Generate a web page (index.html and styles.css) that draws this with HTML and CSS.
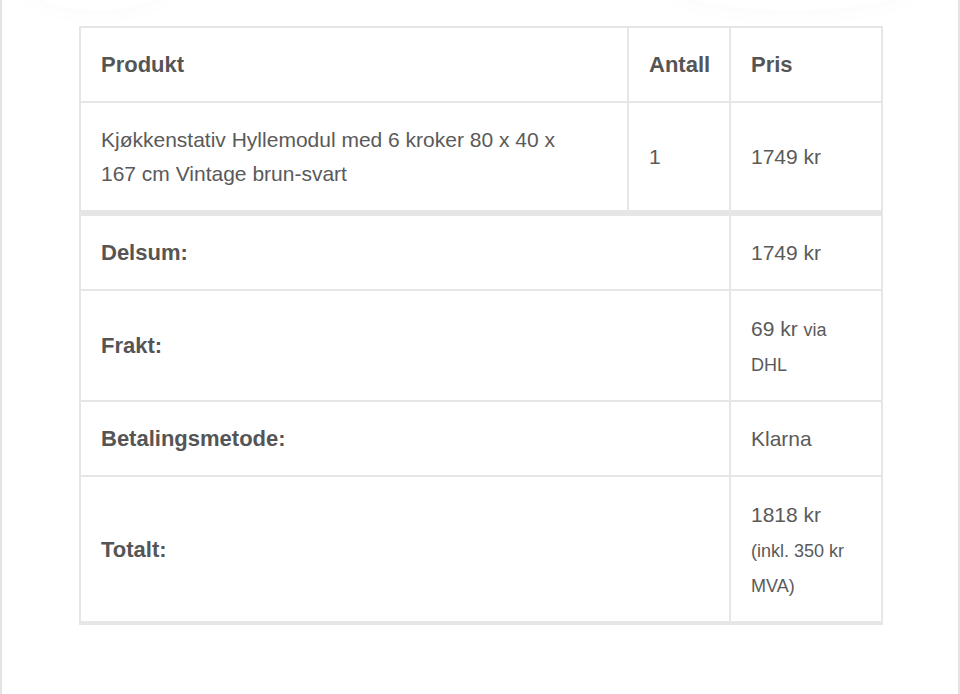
FILE: index.html
```html
<!DOCTYPE html>
<html lang="no">
<head>
    <meta charset="UTF-8">
    <meta name="viewport" content="width=device-width, initial-scale=1.0">
    <title>Ordredetaljer</title>
    <link rel="stylesheet" href="styles.css">
</head>
<body>
    <div class="page">
        <div class="glow glow-left"></div>
        <div class="glow glow-right"></div>
        <table class="order-details">
            <thead>
                <tr>
                    <th class="col-product">Produkt</th>
                    <th class="col-qty">Antall</th>
                    <th class="col-price">Pris</th>
                </tr>
            </thead>
            <tbody>
                <tr>
                    <td class="col-product product-name">Kjøkkenstativ Hyllemodul med 6 kroker 80 x 40 x 167 cm Vintage brun-svart</td>
                    <td class="col-qty">1</td>
                    <td class="col-price">1749 kr</td>
                </tr>
            </tbody>
            <tfoot>
                <tr>
                    <th colspan="2">Delsum:</th>
                    <td>1749 kr</td>
                </tr>
                <tr>
                    <th colspan="2">Frakt:</th>
                    <td class="multi">69 kr <small>via</small> <small>DHL</small></td>
                </tr>
                <tr>
                    <th colspan="2">Betalingsmetode:</th>
                    <td>Klarna</td>
                </tr>
                <tr>
                    <th colspan="2">Totalt:</th>
                    <td class="total">1818 kr <small>(inkl. 350 kr</small> <small>MVA)</small></td>
                </tr>
            </tfoot>
        </table>
    </div>
</body>
</html>
```

FILE: styles.css
```css
*{
    margin: 0;
    padding: 0;
    box-sizing: border-box;
}
body{
    font-family: "Liberation Sans", Arial, sans-serif;
    color: #5a5a5a;
    background-color: #fff;
}
.page{
    position: relative;
    height: 694px;
    border-left: 2px solid #e3e3e3;
    border-right: 2px solid #e3e3e3;
    padding-top: 26px;
    overflow: hidden;
}
.glow{
    position: absolute;
    top: -50px;
    height: 60px;
    border-radius: 50%;
    box-shadow: 0 6px 22px rgba(0, 0, 0, 0.015);
}
.glow-left{
    left: 20px;
    width: 150px;
}
.glow-right{
    left: 660px;
    width: 260px;
}
.order-details{
    margin-left: 77px;
    width: 804px;
    border-collapse: collapse;
    border: 2px solid #e6e6e6;
    border-bottom-width: 4px;
    font-size: 21px;
    line-height: 34px;
}
.order-details th,
.order-details td{
    border: 2px solid #e6e6e6;
    padding: 20px 18px 19px 20px;
    text-align: left;
    vertical-align: middle;
}
.order-details th{
    font-size: 22px;
    font-weight: bold;
    color: #555;
}
.col-product{
    width: 548px;
}
.order-details .product-name{
    padding-right: 40px;
}
.col-qty{
    width: 102px;
}
tfoot tr:first-child th,
tfoot tr:first-child td{
    border-top-width: 6px;
}
small{
    font-size: 18px;
    line-height: 1;
    white-space: nowrap;
}
.multi{
    line-height: 35px;
}
.total{
    line-height: 35px;
}
```
